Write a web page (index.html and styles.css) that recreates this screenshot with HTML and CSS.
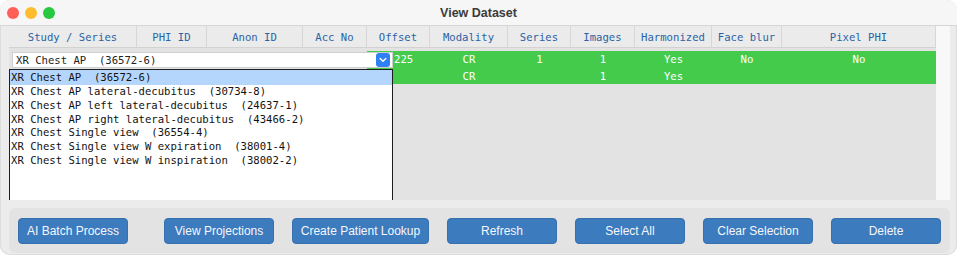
FILE: index.html
```html
<!DOCTYPE html>
<html lang="en">
<head>
  <meta charset="UTF-8" />
  <title>View Dataset</title>
  <link rel="stylesheet" href="styles.css">
</head>
<body>
  <div class="window">
    <div class="titlebar">
      <div class="lights">
        <span class="light red"></span>
        <span class="light yellow"></span>
        <span class="light green"></span>
      </div>
      <div class="title">View Dataset</div>
    </div>

    <div class="content">
      <div class="scroll-area">
        <div class="table">
          <div class="thead">
            <div class="th">Study / Series</div>
            <div class="th">PHI ID</div>
            <div class="th">Anon ID</div>
            <div class="th">Acc No</div>
            <div class="th">Offset</div>
            <div class="th">Modality</div>
            <div class="th">Series</div>
            <div class="th">Images</div>
            <div class="th">Harmonized</div>
            <div class="th">Face blur</div>
            <div class="th">Pixel PHI</div>
          </div>

          <div class="tbody">
            <div class="row">
              <div class="spacer"></div>
              <div class="td offset">225</div>
              <div class="td">CR</div>
              <div class="td">1</div>
              <div class="td">1</div>
              <div class="td">Yes</div>
              <div class="td">No</div>
              <div class="td">No</div>
            </div>
            <div class="row">
              <div class="spacer"></div>
              <div class="td offset"></div>
              <div class="td">CR</div>
              <div class="td"></div>
              <div class="td">1</div>
              <div class="td">Yes</div>
              <div class="td"></div>
              <div class="td"></div>
            </div>

            <!-- combo editor open on the first row -->
            <div class="combo">
              <span class="combo-text">XR Chest AP  (36572-6)</span>
              <span class="combo-btn">
                <svg width="8" height="6" viewBox="0 0 8 6"><path d="M1.2 1.5 L4 4.3 L6.8 1.5" fill="none" stroke="#fff" stroke-width="1.4" stroke-linecap="round" stroke-linejoin="round"/></svg>
              </span>
            </div>
            <ul class="dropdown">
              <li class="selected">XR Chest AP  (36572-6)</li>
              <li>XR Chest AP lateral-decubitus  (30734-8)</li>
              <li>XR Chest AP left lateral-decubitus  (24637-1)</li>
              <li>XR Chest AP right lateral-decubitus  (43466-2)</li>
              <li>XR Chest Single view  (36554-4)</li>
              <li>XR Chest Single view W expiration  (38001-4)</li>
              <li>XR Chest Single view W inspiration  (38002-2)</li>
            </ul>
          </div>
        </div>
        <div class="vscroll"></div>
      </div>

      <div class="buttons">
        <button class="btn first">AI Batch Process</button>
        <button class="btn">View Projections</button>
        <button class="btn wide">Create Patient Lookup</button>
        <button class="btn">Refresh</button>
        <button class="btn">Select All</button>
        <button class="btn">Clear Selection</button>
        <button class="btn">Delete</button>
      </div>
    </div>
  </div>
</body>
</html>
```

FILE: styles.css
```css
body { margin: 0; background: #fff; }

.window {
  width: 957px;
  height: 255px;
  border-radius: 10px;
  overflow: hidden;
  background: #ececec;
  box-shadow: inset 0 0 0 1px #dcdcdc;
}

.titlebar {
  height: 25px;
  background: #f6f6f6;
  border-bottom: 1px solid #d6d6d6;
  display: grid;
  grid-template-columns: 1fr auto 1fr;
  align-items: center;
}
.lights { display: flex; gap: 6px; padding-left: 7px; }
.light { width: 12px; height: 12px; border-radius: 50%; }
.light.red { background: #ff5f57; }
.light.yellow { background: #febc2e; }
.light.green { background: #28c840; }
.title { font-family: "Liberation Sans", Arial, sans-serif; font-weight: bold; font-size: 12.5px; color: #3b3b3b; }

.content { padding: 0 7px 0 9px; }

.scroll-area { display: flex; height: 174px; }
.table { width: 927px; display: flex; flex-direction: column; }
.vscroll { width: 14px; background: #f8f8f8; }

.thead, .row {
  display: grid;
  grid-template-columns: 128px 70px 96px 64px 63px 78px 63px 64px 77px 70px 154px;
}
.thead {
  height: 21px;
  background: #ebebeb;
  border-bottom: 1px solid #d2d2d2;
}
.th {
  font-family: "DejaVu Sans Mono", monospace;
  font-size: 10.6px;
  color: #2a62a6;
  display: flex;
  align-items: center;
  justify-content: center;
  border-right: 1px solid #d7d7d7;
}

.tbody {
  flex: 1;
  position: relative;
  background: #e3e3e3;
  padding-top: 3px;
  overflow: hidden;
}
.row { height: 16.5px; }
.spacer { grid-column: span 4; }
.td {
  background: #45cb4b;
  color: #fff;
  font-family: "DejaVu Sans Mono", monospace;
  font-size: 10.6px;
  display: flex;
  align-items: center;
  justify-content: center;
}
.td.offset { justify-content: flex-start; padding-left: 27px; }

.combo {
  position: absolute;
  left: 3px;
  top: 4px;
  width: 381px;
  height: 16px;
  box-sizing: border-box;
  background: #fff;
  border: 1px solid #cfcfcf;
  display: flex;
  align-items: center;
  justify-content: space-between;
  padding: 0 2px 0 3px;
}
.combo-text { font-family: "DejaVu Sans Mono", monospace; font-size: 10.6px; color: #222; white-space: pre; }
.combo-btn {
  width: 14px;
  height: 14px;
  border-radius: 3px;
  background: #2f7ff5;
  display: flex;
  align-items: center;
  justify-content: center;
}

.dropdown {
  position: absolute;
  left: 0;
  top: 21px;
  bottom: 0;
  width: 384px;
  box-sizing: border-box;
  margin: 0;
  padding: 0;
  list-style: none;
  background: #fff;
  border: 1px solid #1e1e1e;
  border-bottom: none;
}
.dropdown li {
  font-family: "DejaVu Sans Mono", monospace;
  font-size: 10.6px;
  color: #111;
  white-space: pre;
  line-height: 13.8px;
  padding-left: 1px;
}
.dropdown li.selected { background: #b4d6fd; line-height: 15px; }

.buttons {
  margin-top: 8px;
  height: 45px;
  border-radius: 6px;
  background: #e3e3e3;
  display: flex;
  align-items: center;
  gap: 18px;
  padding-left: 9px;
}
.btn {
  width: 110px;
  height: 26px;
  border-radius: 4px;
  border: 1px solid #3670ae;
  background: #3d7bbf;
  color: #f4f7fb;
  font-family: "Liberation Sans", Arial, sans-serif;
  font-size: 12px;
  padding: 0;
}
.btn.first { margin-right: 18px; }
.btn.wide { width: 137px; }
```
